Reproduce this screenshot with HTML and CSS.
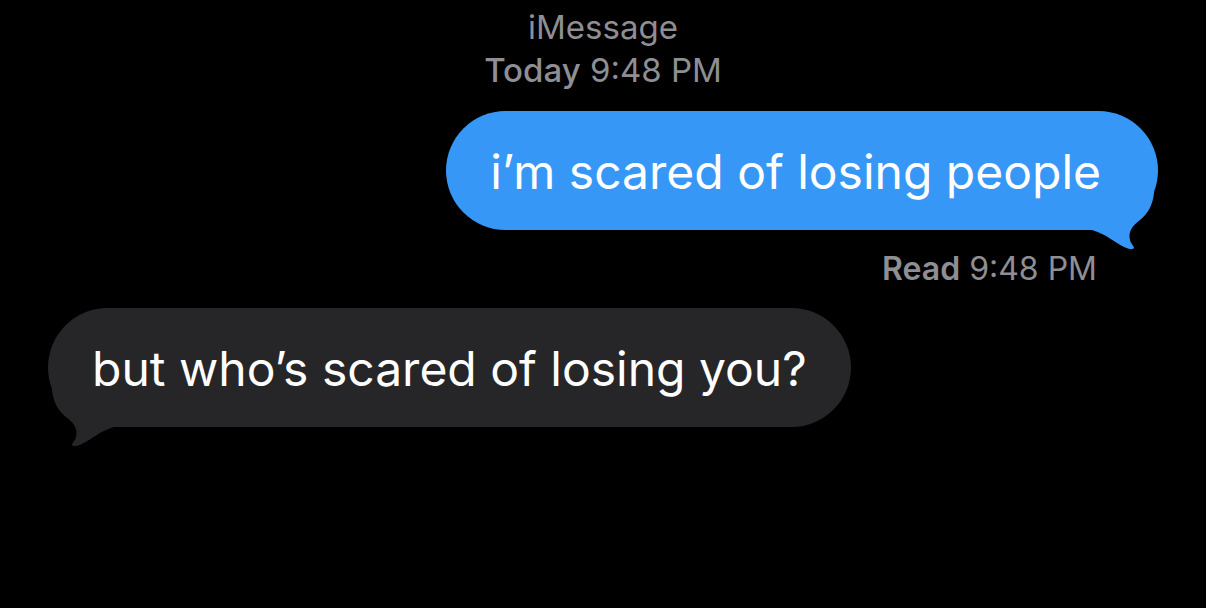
FILE: index.html
```html
<!DOCTYPE html>
<html lang="en">
<head>
  <meta charset="UTF-8" />
  <meta name="viewport" content="width=device-width, initial-scale=1.0"/>
  <title>Messages</title>
  <link rel="stylesheet" href="styles.css">
</head>
<body>
  <div class="thread">
    <div class="header">
      <div>iMessage</div>
      <div><b>Today</b> 9:48 PM</div>
    </div>

    <div class="row row-sent">
      <div class="bubble sent">
        i’m scared of losing people
        <!-- tail hooks out of the bottom right corner -->
        <svg class="tail" viewBox="0 0 70 62" width="70" height="62">
          <path d="M40 0 L66 0 L66 3 C65 14 60 24 52 30 C44 36 40 42 42 50 C43 54 46 56 46 58 C45 60 40 59 36 57 C26 52 18 44 4 40 L0 40 L0 0 Z"/>
        </svg>
      </div>
    </div>

    <div class="receipt"><b>Read</b> 9:48 PM</div>

    <div class="row">
      <div class="bubble received">
        but who’s scared of losing you?
        <!-- same tail, mirrored for the left side -->
        <svg class="tail" viewBox="0 0 70 62" width="70" height="62">
          <path d="M30 0 L4 0 L4 3 C5 14 10 24 18 30 C26 36 30 42 28 50 C27 54 24 56 24 58 C25 60 30 59 34 57 C44 52 52 44 66 40 L70 40 L70 0 Z"/>
        </svg>
      </div>
    </div>
  </div>
</body>
</html>
```

FILE: styles.css
```css
body {
  margin: 0;
  min-height: 100vh;
  background-color: #000;
  font-family: Inter, 'Noto Sans', sans-serif;
  color: #fff;
}
.thread {
  padding: 6px 48px 120px;
}
.header {
  text-align: center;
  color: #8e8e93;
  font-size: 33px;
  line-height: 43px;
}
.header b {
  font-weight: 500;
}
.row {
  display: flex;
}
.row-sent {
  justify-content: flex-end;
  margin-top: 19px;
}
.bubble {
  position: relative;
  font-size: 48px;
  line-height: 56px;
  padding: 33px 44px 30px;
  border-radius: 60px;
}
.bubble.sent {
  background-color: #3797f7;
  padding-right: 57px;
}
.bubble.received {
  background-color: #262629;
}
.tail {
  position: absolute;
  top: calc(100% - 40px);
  left: calc(100% - 70px);
}
.sent .tail {
  fill: #3797f7;
}
.received .tail {
  fill: #262629;
  left: 0;
}
.receipt {
  text-align: right;
  color: #8e8e93;
  font-size: 32px;
  line-height: 38px;
  margin: 20px 61px 20px 0;
}
.receipt b {
  font-weight: 600;
}
```
